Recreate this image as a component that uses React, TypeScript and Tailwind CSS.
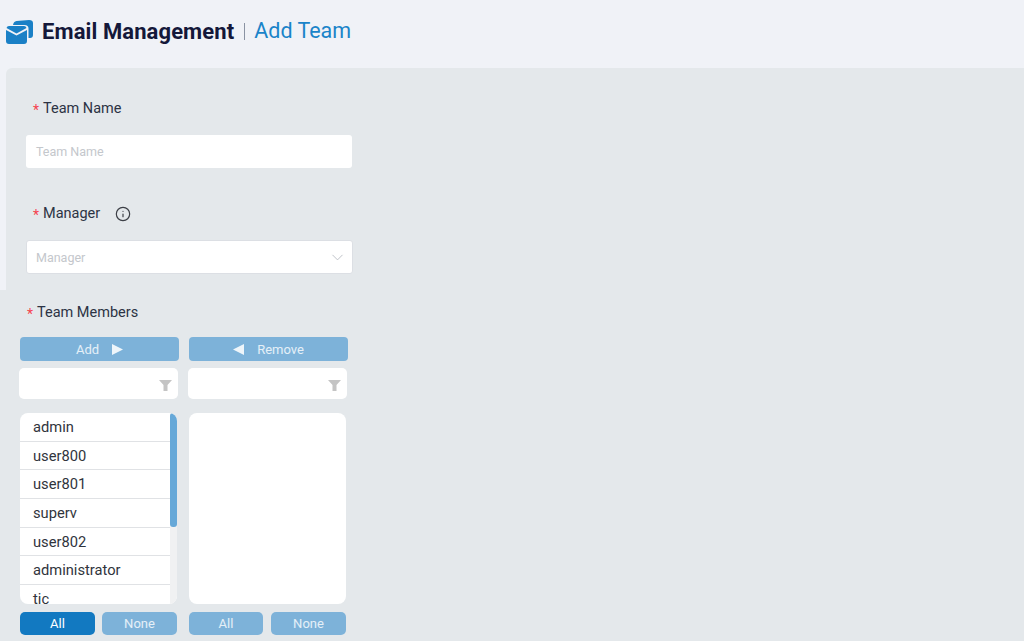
import React from 'react';
import { ChevronDown, Info } from 'lucide-react';

const font = "font-['Roboto',sans-serif]";
const users = ['admin', 'user800', 'user801', 'superv', 'user802', 'administrator', 'tic'];

const Star = () => <span className="text-[#f5434f] text-[14px] leading-none mt-[2px]">*</span>;

const FilterBox = () => (
  <div className="h-[31px] w-[159px] bg-white rounded-[5px] flex items-center justify-end pr-[6px]">
    <svg width="13" height="11" viewBox="0 0 13 11" className="mt-[3px]">
      <path d="M0 0h13L8.500 5V11H4.500V5z" fill="#c4c4c4" />
    </svg>
  </div>
);

const SmallButton = ({ label, active, className }: { label: string; active?: boolean; className: string }) => (
  <button type="button" className={`h-[23px] rounded-[5px] text-[13px] ${active ? 'bg-[#1279c1] text-white' : 'bg-[#7db2d9] text-white/80'} ${className}`}>
    {label}
  </button>
);

export default function App() {
  return (
    <div className={`w-[1024px] h-[641px] overflow-hidden bg-[#f0f2f7] ${font}`}>
      <header className="h-[68px] flex items-center pl-[6px] pb-[5px]">
        <svg width="27" height="24" viewBox="0 0 27 24" className="mr-[9px]">
          <path d="M7 5Q7.500 1.500 10.500 1L23 0Q27 0 27 3V15Q27 18 24 18H22.500V8.500Q22.500 5 18.500 5z" fill="#1a80c6" />
          <path d="M.5 8Q1 6 3 6H18Q20 6 20.500 8L10.500 13.500z" fill="#1a80c6" />
          <path d="M0 10L10.500 15.500 21 10V21Q21 24 18 24H3Q0 24 0 21z" fill="#1a80c6" />
        </svg>
        <span className="text-[22px] font-bold text-[#14183a] tracking-[0.1px]">Email Management</span>
        <span className="ml-[10px] mr-[9px] h-[17px] w-px bg-[#8a93a3]" />
        <span className="text-[21.500px] text-[#1a84c9]">Add Team</span>
      </header>

      <section className="ml-[6px] h-[222px] bg-[#e4e8eb] rounded-tl-[6px] pl-[20px] pt-[30px]">
        <div className="-ml-px flex items-center gap-[4px] pl-[8px] pt-[2px] h-[20px] text-[14.500px] text-[#2c3344]">
          <Star />
          <span>Team Name</span>
        </div>
        <div className="mt-[17px] w-[326px] h-[33px] bg-white rounded-[3px] flex items-center pl-[10px] pt-[2px] text-[12.500px] text-[#c4c7cc]">
          Team Name
        </div>
        <div className="mt-[35px] -ml-px flex items-center gap-[4px] pl-[8px] pt-[2px] h-[20px] text-[14.500px] text-[#2c3344]">
          <Star />
          <span>Manager</span>
          <Info size={16} strokeWidth={1.8} className="ml-[11px] text-[#3c3f46]" />
        </div>
        <div className="mt-[17px] w-[327px] h-[34px] bg-white rounded-[3px] border border-[#dcdfe4] flex items-center justify-between pl-[9px] pr-[5px] text-[12.500px] text-[#c4c7cc]">
          <span className="pt-[2px]">Manager</span>
          <ChevronDown size={19} strokeWidth={1.1} className="text-[#b5b9c0]" />
        </div>
      </section>

      <section className="h-[351px] bg-[#e4e8eb] pl-[20px] pt-[12px]">
        <div className="flex items-center gap-[4px] pl-[7px] pt-[2px] h-[20px] text-[14.500px] text-[#2c3344]">
          <Star />
          <span>Team Members</span>
        </div>
        <div className="mt-[15px] flex gap-[10px]">
          <button type="button" className="w-[159px] h-[24px] pt-[1px] bg-[#7db2d9] rounded-[4px] flex items-center justify-center gap-[13px] text-[13px] text-white/80">
            Add
            <svg width="11" height="11" viewBox="0 0 11 11"><path d="M0 0l11 5.500L0 11z" fill="#eef5fa" /></svg>
          </button>
          <button type="button" className="w-[159px] h-[24px] pt-[1px] bg-[#7db2d9] rounded-[4px] flex items-center justify-center gap-[13px] text-[13px] text-white/80">
            <svg width="11" height="11" viewBox="0 0 11 11"><path d="M11 0L0 5.500 11 11z" fill="#eef5fa" /></svg>
            Remove
          </button>
        </div>
        <div className="mt-[7px] -ml-px flex gap-[10px]">
          <FilterBox />
          <FilterBox />
        </div>
        <div className="mt-[14px] flex gap-[12px]">
          <div className="relative w-[157px] h-[191px] bg-white rounded-[8px] overflow-hidden">
            <div className="absolute right-0 top-0 w-[7px] h-full bg-[#f0f1f2]" />
            <div className="absolute right-0 top-0 w-[7px] h-[114px] rounded-[3px] bg-[#66a8d8]" />
            {users.map((user) => (
              <div key={user} className="h-[28.700px] border-b border-[#e0e2e5] mr-[7px] pl-[13px] pt-[3px] text-[14.700px] text-[#30343c]">
                {user}
              </div>
            ))}
          </div>
          <div className="w-[157px] h-[191px] bg-white rounded-[8px]" />
        </div>
        <div className="mt-[8px] flex">
          <SmallButton label="All" active className="w-[75px]" />
          <SmallButton label="None" className="w-[75px] ml-[7px]" />
          <SmallButton label="All" className="w-[74px] ml-[12px]" />
          <SmallButton label="None" className="w-[75px] ml-[8px]" />
        </div>
      </section>
    </div>
  );
}
